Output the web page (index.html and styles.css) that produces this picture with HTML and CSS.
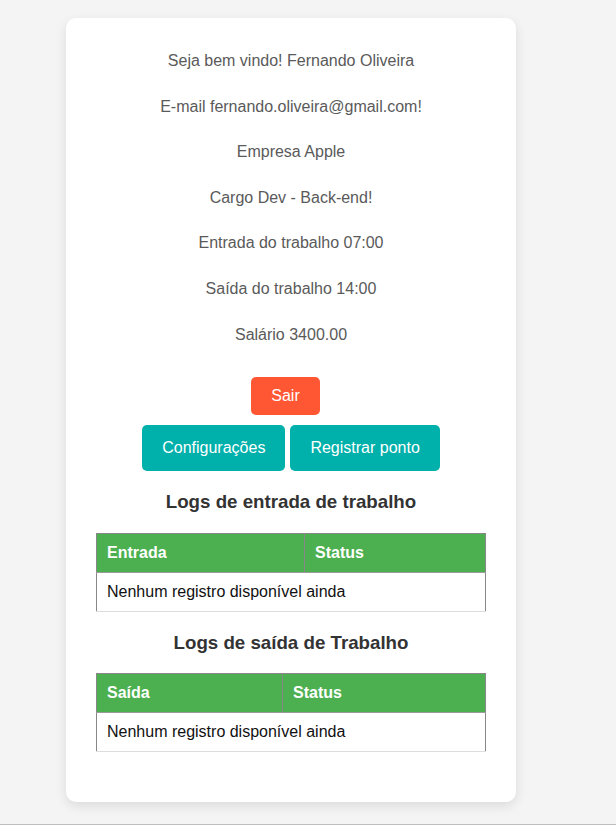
FILE: index.html
```html
<!DOCTYPE html>
<html lang="pt-BR">
<head>
<meta charset="utf-8">
<title>Painel</title>
<link rel="stylesheet" href="styles.css">
</head>
<body>
<div class="page">
  <div class="card">
    <p class="info">Seja bem vindo! Fernando Oliveira</p>
    <p class="info">E-mail fernando.oliveira@gmail.com!</p>
    <p class="info">Empresa Apple</p>
    <p class="info">Cargo Dev - Back-end!</p>
    <p class="info">Entrada do trabalho 07:00</p>
    <p class="info">Saída do trabalho 14:00</p>
    <p class="info">Salário 3400.00</p>

    <div class="actions">
      <div class="row row-logout">
        <button class="btn btn-danger">Sair</button>
      </div>
      <div class="row">
        <button class="btn btn-teal">Configurações</button>
        <button class="btn btn-teal">Registrar ponto</button>
      </div>
    </div>

    <h3 class="section-title">Logs de entrada de trabalho</h3>
    <table class="logs">
      <thead>
        <tr><th class="col-entrada">Entrada</th><th>Status</th></tr>
      </thead>
      <tbody>
        <tr><td colspan="2">Nenhum registro disponível ainda</td></tr>
      </tbody>
    </table>

    <h3 class="section-title">Logs de saída de Trabalho</h3>
    <table class="logs">
      <thead>
        <tr><th class="col-saida">Saída</th><th>Status</th></tr>
      </thead>
      <tbody>
        <tr><td colspan="2">Nenhum registro disponível ainda</td></tr>
      </tbody>
    </table>
  </div>
</div>
</body>
</html>
```

FILE: styles.css
```css
html, body {
  margin: 0;
  padding: 0;
}

body {
  background: #f4f4f4;
  font-family: "Liberation Sans", Arial, sans-serif;
  font-size: 16px;
  height: 824px;
  border-bottom: 1px solid #bdbdbd;
}

.page {
  display: flex;
  justify-content: center;
  padding: 18px 34px 0 0;
}

.card {
  width: 450px;
  box-sizing: border-box;
  background: #ffffff;
  border-radius: 10px;
  padding: 30px;
  box-shadow: 0 4px 12px rgba(0, 0, 0, 0.1);
  text-align: center;
}

.info {
  margin: 0 0 20px;
  color: #5a5a5a;
  line-height: 25.6px;
}

.actions {
  display: flex;
  flex-direction: column;
  gap: 10px;
  margin-top: 30px;
}

.row {
  display: flex;
  justify-content: center;
  gap: 5px;
}

.row-logout {
  padding-right: 11px;
}

.btn {
  font-family: "Liberation Sans", Arial, sans-serif;
  font-size: 16px;
  line-height: 18px;
  color: #ffffff;
  border: none;
  border-radius: 5px;
  padding: 10px 20px;
  cursor: pointer;
}

.btn-danger {
  background: #ff5733;
}

.btn-teal {
  background: #00b0aa;
  padding: 14px 20px;
}

.section-title {
  margin: 20px 0;
  font-size: 18.72px;
  font-weight: bold;
  color: #333333;
  line-height: 21.5px;
}

.logs {
  width: 100%;
  border-collapse: collapse;
  border: 1px solid #888888;
  margin: 20px 0;
  text-align: left;
}

.logs th {
  background: #4caf50;
  color: #ffffff;
  font-weight: bold;
  padding: 10px;
  line-height: 18px;
  border-right: 1px solid #888888;
  border-bottom: 1px solid #9a9a9a;
}

.logs th:last-child {
  border-right: none;
}

.logs td {
  padding: 10px;
  line-height: 18px;
  color: #111111;
  border-bottom: 1px solid #dddddd;
}

.col-entrada {
  width: 187px;
}

.col-saida {
  width: 165px;
}
```
